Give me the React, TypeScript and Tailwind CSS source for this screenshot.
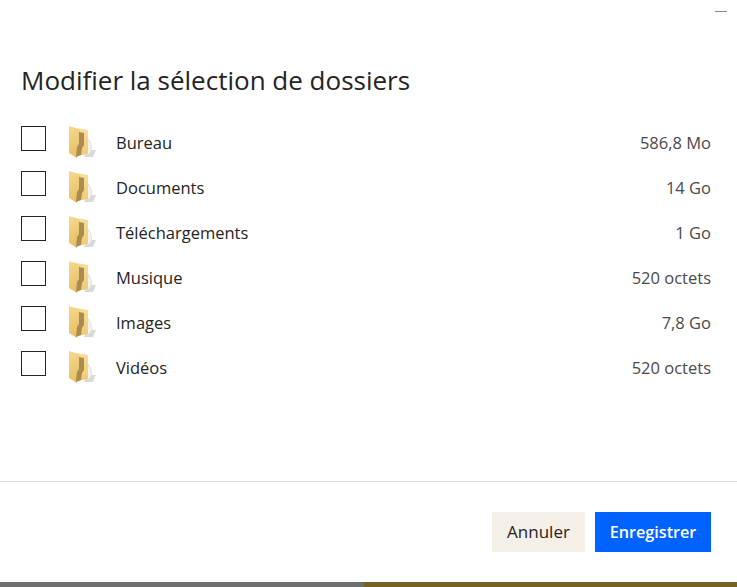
import React from 'react';

const folders = [
    { name: 'Bureau', size: '586,8 Mo' },
    { name: 'Documents', size: '14 Go' },
    { name: 'Téléchargements', size: '1 Go' },
    { name: 'Musique', size: '520 octets' },
    { name: 'Images', size: '7,8 Go' },
    { name: 'Vidéos', size: '520 octets' },
];

const FolderIcon: React.FC = () => (
    <svg width="28" height="33" viewBox="0 0 28 33" className="shrink-0">
        <defs>
            <linearGradient id="leaf" x1="0" y1="0" x2="0.3" y2="1">
                <stop offset="0" stopColor="#f6d98f" />
                <stop offset="1" stopColor="#e8c069" />
            </linearGradient>
            <linearGradient id="back" x1="0" y1="0" x2="0" y2="1">
                <stop offset="0" stopColor="#f8df9a" />
                <stop offset="1" stopColor="#efcb78" />
            </linearGradient>
        </defs>
        <path d="M20 24 L28 24 L25 31 L16 31 Z" fill="#d9d9d9" />
        <path d="M20 13 Q24 17 23.5 24 Q22 29 18 29 Z" fill="#f3f3ec" stroke="#d6d6cc" strokeWidth="0.6" />
        <path d="M3 1 L20 4 L20 28 L9 30 L3 27 Z" fill="url(#back)" />
        <path d="M1 0 L12 4 L12 19 L10 22 L9 32 L1 27 Z" fill="url(#leaf)" />
        <path d="M11 6 L16 7 L16 19 L14 22 L13 29 L8 31 L9 21 L11 18 Z" fill="#ab8c4e" />
    </svg>
);

export default function App() {
    return (
        <div className="h-[587px] w-[737px] flex flex-col overflow-hidden bg-white font-['Open_Sans','Noto_Sans',sans-serif] text-[#252423]">
            <div className="h-[582px] flex flex-col">
                <div className="h-[22px] flex justify-end pr-[10px] pt-[11px]">
                    <div className="w-3 h-px bg-[#8a8a8a]" />
                </div>
                <div className="flex-1 px-[21px]">
                    <h1 className="mt-[40px] text-[26px] leading-[36px] font-normal">Modifier la sélection de dossiers</h1>
                    <ul className="mt-[22px] pr-[5px]">
                        {folders.map((f) => (
                            <li key={f.name} className="h-[45px] flex items-center text-[16.5px]">
                                <span className="w-[25px] h-[25px] mb-[8px] border border-[#252423] shrink-0" />
                                <span className="ml-[22px] flex"><FolderIcon /></span>
                                <span className="ml-[20px] pt-[2px] font-medium">{f.name}</span>
                                <span className="ml-auto pt-[2px] text-[#4a4a4a]">{f.size}</span>
                            </li>
                        ))}
                    </ul>
                </div>
                <div className="h-[101px] border-t border-[#dcdcdc] flex justify-end items-start gap-[10px] pt-[30px] pr-[26px]">
                    <button className="w-[93px] h-10 bg-[#f4efe7] text-[17px] text-[#252423]">Annuler</button>
                    <button className="w-[116px] h-10 bg-[#0063ff] text-[16.2px] font-semibold text-white">Enregistrer</button>
                </div>
            </div>
            <div className="h-[5px] flex">
                <div className="w-[364px] bg-[#6e6e6e]" />
                <div className="flex-1 bg-[#776226]" />
            </div>
        </div>
    );
}
